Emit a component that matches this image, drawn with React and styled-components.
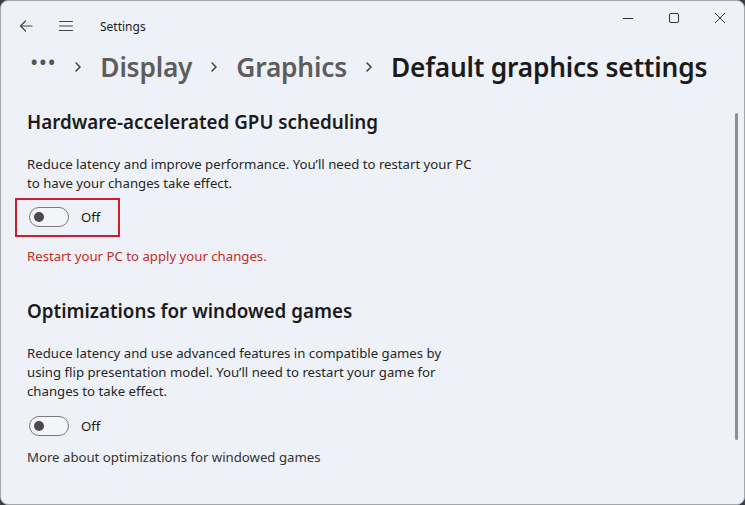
import React from "react";
import styled, { createGlobalStyle } from "styled-components";

const Global = createGlobalStyle`
  html, body {
    margin: 0;
    padding: 0;
    background: #3a3f47;
  }
  body {
    font-family: "Noto Sans", "Open Sans", sans-serif;
  }
`;

const Window = styled.div`
  width: 745px;
  height: 505px;
  box-sizing: border-box;
  border: 1px solid #a3a6aa;
  border-radius: 8px;
  background: #eef2f8;
  overflow: hidden;
  display: flex;
  flex-direction: column;
`;

const TitleBar = styled.div`
  display: flex;
  align-items: flex-start;
  height: 46px;
  flex-shrink: 0;
`;

const NavButton = styled.div`
  width: 40px;
  height: 50px;
  display: flex;
  align-items: center;
  justify-content: center;
  color: #444;
  margin-left: ${({ $ml }) => $ml || 0}px;
`;

const AppTitle = styled.div`
  font-size: 12px;
  color: #1c1c1c;
  line-height: 52px;
  margin-left: 14px;
`;

const Controls = styled.div`
  margin-left: auto;
  display: flex;
  margin-right: 1px;
`;

const ControlButton = styled.div`
  width: 46px;
  height: 33px;
  display: flex;
  align-items: center;
  justify-content: center;
  color: #333;
`;

const Breadcrumb = styled.div`
  display: flex;
  align-items: center;
  height: 39px;
  padding-left: 29px;
  flex-shrink: 0;
`;

const Dots = styled.div`
  font-size: 22px;
  color: #555;
  letter-spacing: 0.5px;
  line-height: 1;
  margin-top: -12px;
`;

const Chevron = styled.div`
  width: 44px;
  display: flex;
  justify-content: center;
  color: #444;
`;

const Crumb = styled.div`
  font-size: 26.3px;
  font-weight: 600;
  color: ${({ $current }) => ($current ? "#1b1b1b" : "#5d5d5d")};
  letter-spacing: -0.2px;
`;

const Body = styled.div`
  flex: 1;
  display: flex;
  min-height: 0;
`;

const Content = styled.div`
  flex: 1;
  padding: 21px 0 0 26px;
`;

const Scrollbar = styled.div`
  width: 3px;
  margin: 27px 6px 64px 0;
  background: #8c8f93;
  border-radius: 2px;
`;

const Section = styled.div`
  margin-bottom: ${({ $mb }) => $mb || 0}px;
`;

const Heading = styled.div`
  font-size: 18.8px;
  font-weight: 600;
  color: #1b1b1b;
  height: 30px;
  line-height: 30px;
`;

const Description = styled.div`
  font-size: 13.2px;
  line-height: 19px;
  color: #262626;
  margin-top: 18px;
  max-width: ${({ $width }) => $width}px;
`;

const ToggleFrame = styled.div`
  display: inline-flex;
  align-items: center;
  gap: 12px;
  box-sizing: border-box;
  margin-top: ${({ $mt }) => $mt}px;
  margin-left: ${({ $boxed }) => ($boxed ? -12 : 2)}px;
  padding: ${({ $boxed }) => ($boxed ? "8px 18px 9px 12px" : "0")};
  border: ${({ $boxed }) => ($boxed ? "2px solid #c8202f" : "none")};
  height: ${({ $boxed }) => ($boxed ? 39 : 20)}px;
`;

const Switch = styled.div`
  width: 40px;
  height: 20px;
  box-sizing: border-box;
  border: 1px solid #7a7a7a;
  border-radius: 10px;
  position: relative;
  background: #f3f5f8;
  &::after {
    content: "";
    position: absolute;
    left: 4px;
    top: 4px;
    width: 10px;
    height: 10px;
    border-radius: 50%;
    background: #4b4b4b;
  }
`;

const SwitchLabel = styled.div`
  font-size: 13.2px;
  color: #1b1b1b;
`;

const Warning = styled.div`
  font-size: 13.2px;
  color: #c42b1c;
  margin-top: 10px;
`;

const LinkText = styled.div`
  font-size: 13.2px;
  color: #333;
  margin-top: 7px;
`;

const BackIcon = () => (
  <svg width="16" height="16" viewBox="0 0 16 16" fill="none" stroke="currentColor" strokeWidth="1.2" strokeLinecap="round" strokeLinejoin="round">
    <path d="M14 8H2.5M7.5 3L2.5 8l5 5" />
  </svg>
);

const MenuIcon = () => (
  <svg width="16" height="16" viewBox="0 0 16 16" fill="none" stroke="currentColor" strokeWidth="1.2" strokeLinecap="round">
    <path d="M1.5 3.5h13M1.5 8h13M1.5 12.5h13" />
  </svg>
);

const ChevronIcon = () => (
  <svg width="10" height="12" viewBox="0 0 10 12" fill="none" stroke="currentColor" strokeWidth="1.6" strokeLinecap="round" strokeLinejoin="round">
    <path d="M3 2l4 4-4 4" />
  </svg>
);

const MinIcon = () => (
  <svg width="10" height="10" viewBox="0 0 10 10" stroke="currentColor" strokeWidth="1">
    <path d="M0 5.5h10" />
  </svg>
);

const MaxIcon = () => (
  <svg width="10" height="10" viewBox="0 0 10 10" fill="none" stroke="currentColor" strokeWidth="1">
    <rect x="0.5" y="0.5" width="9" height="9" rx="1.5" />
  </svg>
);

const CloseIcon = () => (
  <svg width="10" height="10" viewBox="0 0 10 10" stroke="currentColor" strokeWidth="1">
    <path d="M0 0l10 10M10 0L0 10" />
  </svg>
);

const Toggle = ({ boxed, mt }) => (
  <ToggleFrame $boxed={boxed} $mt={mt}>
    <Switch />
    <SwitchLabel>Off</SwitchLabel>
  </ToggleFrame>
);

export default function App() {
  return (
    <>
      <Global />
      <Window>
        <TitleBar>
          <NavButton $ml={5}>
            <BackIcon />
          </NavButton>
          <NavButton>
            <MenuIcon />
          </NavButton>
          <AppTitle>Settings</AppTitle>
          <Controls>
            <ControlButton>
              <MinIcon />
            </ControlButton>
            <ControlButton>
              <MaxIcon />
            </ControlButton>
            <ControlButton>
              <CloseIcon />
            </ControlButton>
          </Controls>
        </TitleBar>
        <Breadcrumb>
          <Dots>•••</Dots>
          <Chevron>
            <ChevronIcon />
          </Chevron>
          <Crumb>Display</Crumb>
          <Chevron>
            <ChevronIcon />
          </Chevron>
          <Crumb>Graphics</Crumb>
          <Chevron>
            <ChevronIcon />
          </Chevron>
          <Crumb $current>Default graphics settings</Crumb>
        </Breadcrumb>
        <Body>
          <Content>
            <Section $mb={31}>
              <Heading>Hardware-accelerated GPU scheduling</Heading>
              <Description $width={452}>
                Reduce latency and improve performance. You’ll need to restart your PC to have your changes take effect.
              </Description>
              <Toggle boxed mt={5} />
              <Warning>Restart your PC to apply your changes.</Warning>
            </Section>
            <Section>
              <Heading>Optimizations for windowed games</Heading>
              <Description $width={425}>
                Reduce latency and use advanced features in compatible games by using flip presentation model. You’ll need to restart your game for changes to take effect.
              </Description>
              <Toggle mt={15} />
              <LinkText>More about optimizations for windowed games</LinkText>
            </Section>
          </Content>
          <Scrollbar />
        </Body>
      </Window>
    </>
  );
}
